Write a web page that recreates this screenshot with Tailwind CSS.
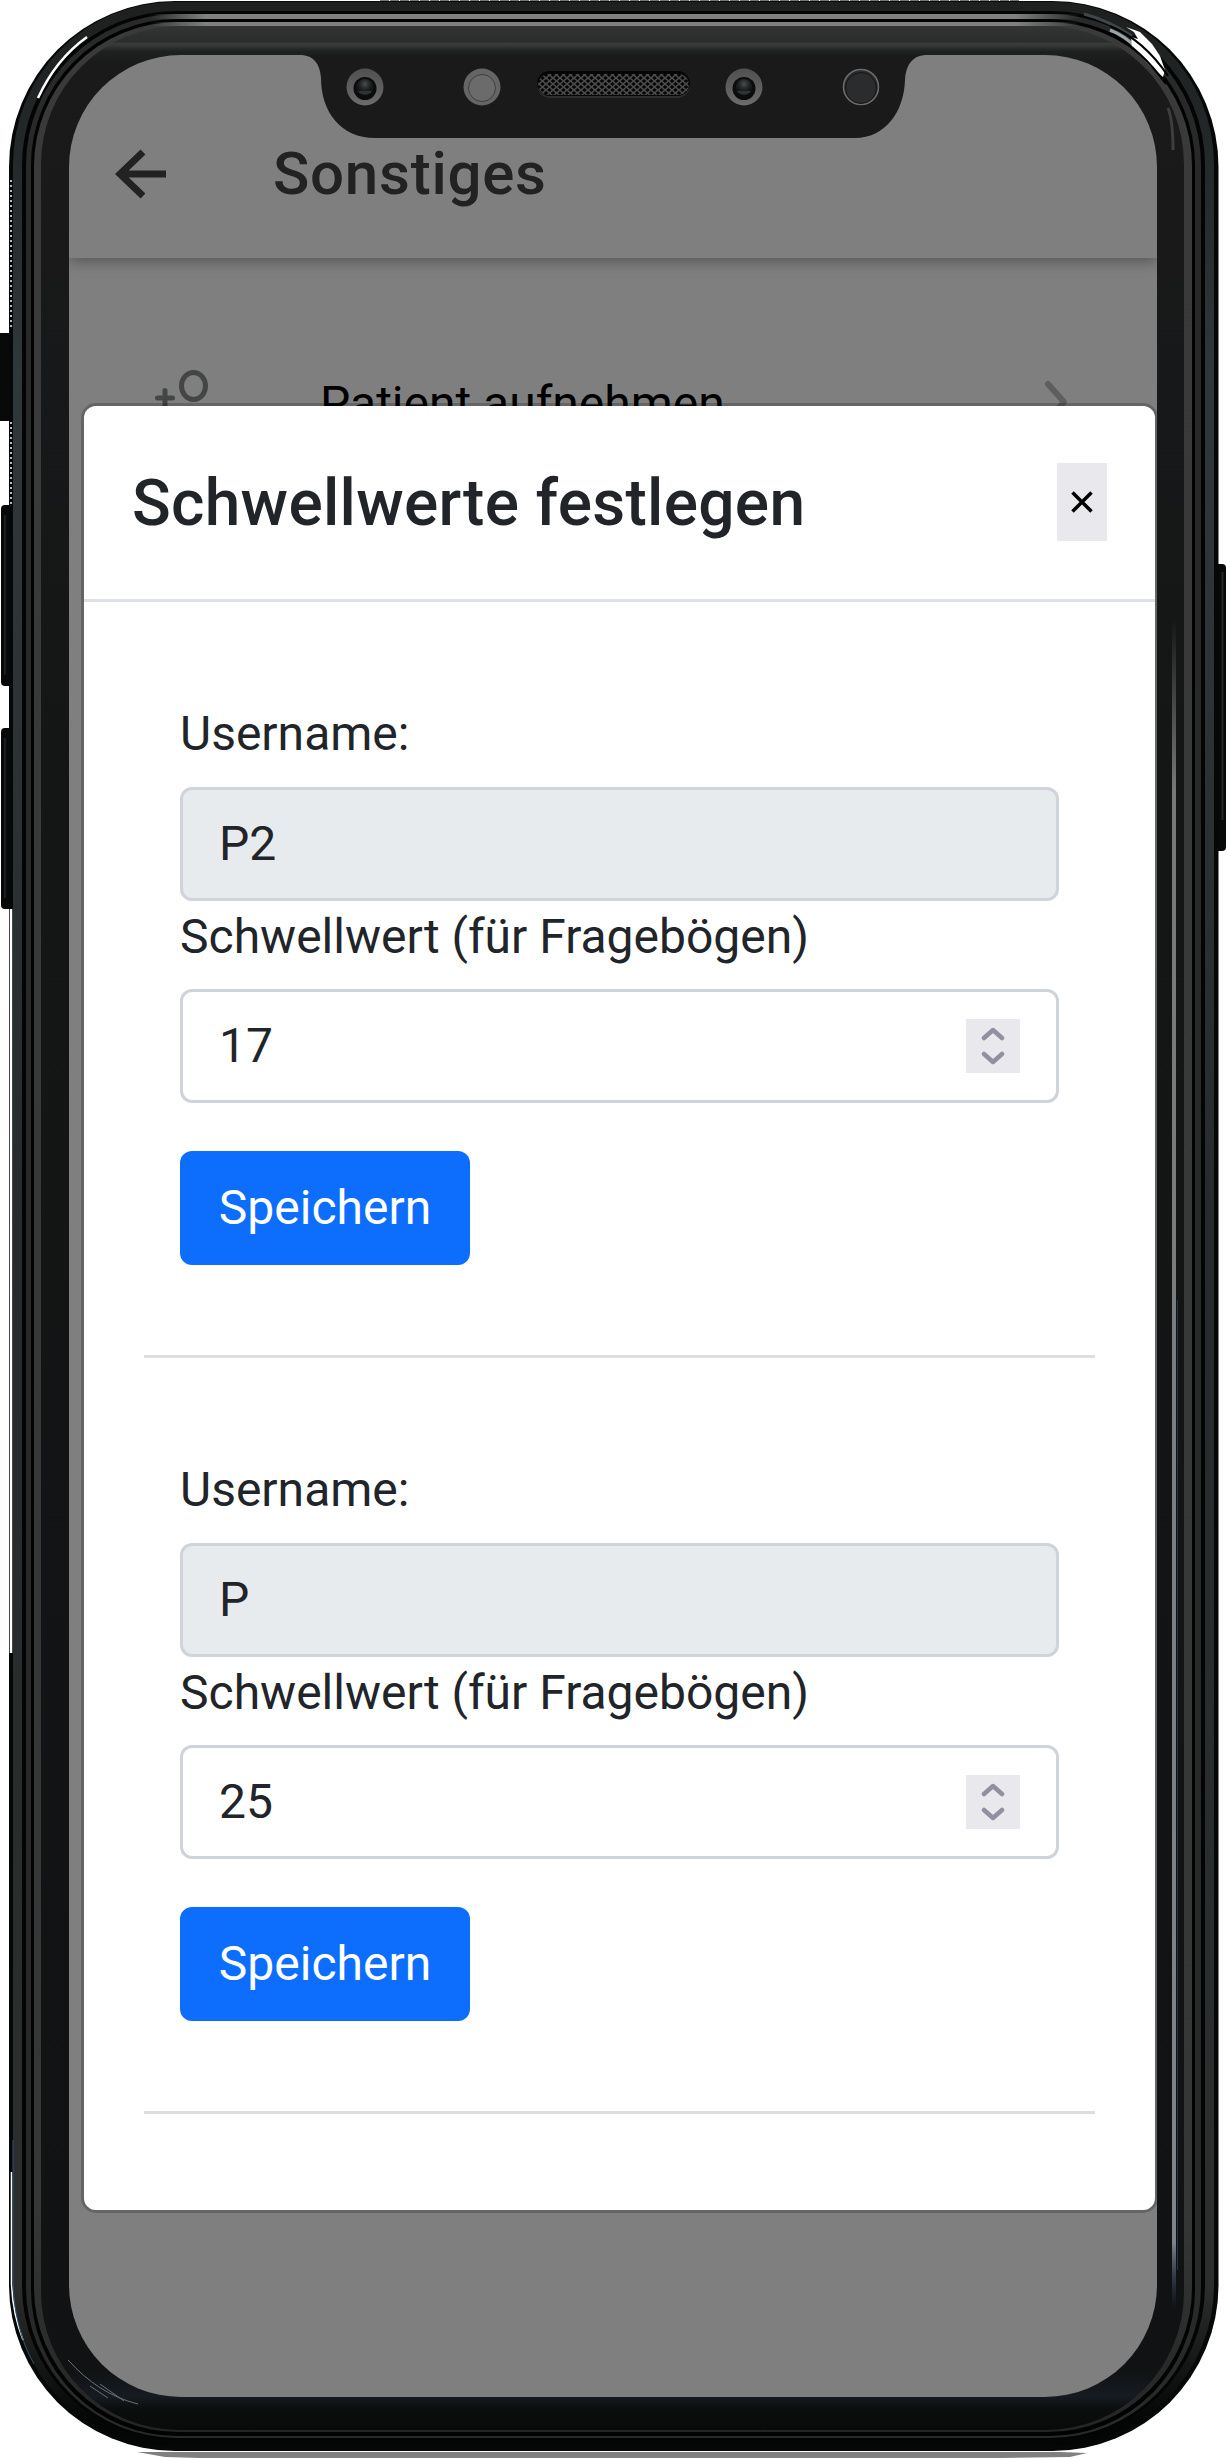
<!DOCTYPE html>
<html lang="de">
<head>
<meta charset="utf-8">
<title>Schwellwerte festlegen</title>
<script src="https://cdn.jsdelivr.net/npm/@tailwindcss/browser@4"></script>
</head>
<body class="bg-white">
<div class="relative w-[1226px] h-[2459px] overflow-hidden bg-white font-['Roboto',sans-serif] pt-[55px] pl-[69px]">
  <!-- device body -->
  <svg class="absolute inset-0" width="1226" height="2459" viewBox="0 0 1226 2459" fill="none">
    <defs>
      <linearGradient id="edge" x1="0" y1="0" x2="0" y2="2459" gradientUnits="userSpaceOnUse">
        <stop offset="0" stop-color="#1e1f1f"/><stop offset=".06" stop-color="#232829"/><stop offset=".15" stop-color="#30373a"/><stop offset=".5" stop-color="#272b2d"/><stop offset=".93" stop-color="#2c2e2e"/><stop offset=".985" stop-color="#040505"/>
      </linearGradient>
      <linearGradient id="lip" x1="0" y1="0" x2="0" y2="2459" gradientUnits="userSpaceOnUse">
        <stop offset="0" stop-color="#3a3a3a"/><stop offset=".9" stop-color="#353737"/><stop offset="1" stop-color="#222"/>
      </linearGradient>
      <linearGradient id="bezel" x1="0" y1="25" x2="0" y2="2430" gradientUnits="userSpaceOnUse">
        <stop offset="0" stop-color="#333434"/><stop offset=".007" stop-color="#2b2c2c"/><stop offset=".0078" stop-color="#3b3d3d"/><stop offset=".011" stop-color="#1f2121"/><stop offset=".016" stop-color="#1a1a1b"/><stop offset=".3" stop-color="#141616"/><stop offset=".975" stop-color="#101213"/><stop offset=".986" stop-color="#161b22"/><stop offset=".991" stop-color="#0b0e0e"/><stop offset="1" stop-color="#090909"/>
      </linearGradient>
      <linearGradient id="shine" x1="150" y1="0" x2="1080" y2="0" gradientUnits="userSpaceOnUse">
        <stop offset="0" stop-color="#808080" stop-opacity="0"/><stop offset=".06" stop-color="#808080"/><stop offset=".93" stop-color="#808080"/><stop offset="1" stop-color="#808080" stop-opacity="0"/>
      </linearGradient>
      <linearGradient id="side" x1="0" y1="620" x2="0" y2="2310" gradientUnits="userSpaceOnUse">
        <stop offset="0" stop-color="#7c7c7c" stop-opacity="0"/><stop offset=".1" stop-color="#777"/><stop offset=".96" stop-color="#808488"/><stop offset="1" stop-color="#2b4666" stop-opacity="0"/>
      </linearGradient>
    </defs>
    <path d="M137 2452H1060L1087 2453L1070 2457L1000 2458H200L165 2457Z" fill="#808080"/>
    <path d="M380 0.5H1020" stroke="#777" stroke-dasharray="9 1"/>
    <g fill="#080a0a">
      <rect x="-4" y="333" width="16" height="88" rx="4"/><rect x="1" y="505" width="16" height="181" rx="4"/><rect x="1" y="728" width="16" height="181" rx="4"/><rect x="1212" y="564" width="14" height="287" rx="4"/>
    </g>
    <path d="M5 515V675M5 738V898" stroke="#1c1e1f" stroke-width="2"/>
    <path d="M1222.500 572V820" stroke="#252727" stroke-width="2"/>
    <rect x="9" y="1" width="1209.500" height="2450" rx="166" fill="#060808"/>
    <rect x="13" y="2" width="1201" height="2445" rx="162" fill="url(#edge)"/>
    <rect x="22" y="11" width="1183" height="2429" rx="154" fill="#040404"/>
    <rect x="26" y="14" width="1175" height="2424" rx="151" fill="#282a2a"/>
    <rect x="31" y="19" width="1164" height="2417" rx="146" fill="#020202"/>
    <rect x="34" y="22" width="1158" height="2410" rx="144" fill="url(#lip)"/>
    <rect x="41" y="26" width="1143" height="2404" rx="138" fill="url(#bezel)"/>
    <rect x="150" y="14" width="930" height="5" fill="url(#shine)"/>
    <rect x="150" y="22" width="930" height="4" fill="url(#shine)"/>
    <rect x="1172" y="620" width="4" height="1690" fill="url(#side)"/>
    <path d="M1177.500 1300V2270" stroke="#1f3247"/>
    <!-- reflections on the metal edge -->
    <path d="M11 180V330M11 422V504" stroke="#b4bcc0" stroke-width="2" stroke-dasharray="2 3"/>
    <path d="M11 909V1653" stroke="#fff" stroke-width="2.500"/>
    <path d="M11.500 2172V2283C12 2300 16 2322 23 2340" stroke="#fff" stroke-width="1.500"/>
    <path d="M13 2140V2283C14 2310 20 2340 34 2364" stroke="#32506e"/>
    <path d="M38 98C50 72 66 52 87 37" stroke="#fff" stroke-width="2.500"/>
    <path d="M1084 14C1104 19 1118 27 1132 36" stroke="#3e474c" stroke-width="3"/>
    <path d="M1110 30C1122 35 1128 39 1134 46" stroke="#9aa3a8" stroke-width="3"/>
    <path d="M1126 27L1140 32L1152 44L1160 56L1165 70L1163 77L1150 66L1132 47L1131 37L1138 39L1134 32Z" fill="#fff"/>
    <path d="M1110 26C1134 36 1152 52 1168 76" stroke="#000" stroke-width="2"/>
    <path d="M1112 34C1134 46 1150 62 1166 84" stroke="#000" stroke-width="2"/>
    <path d="M68 2360C88 2382 110 2397 138 2404M90 2386L108 2398M100 2384L124 2401" stroke="#6b7075" stroke-width="1"/>
    <path d="M1168 108C1172 118 1173 132 1173 150" stroke="#3c3e3f" stroke-width="3"/>
  </svg>

  <!-- screen -->
  <div class="relative w-[1088px] h-[2342px] overflow-hidden rounded-[112px] bg-[#7f7f7f]">
    <header class="flex h-[203px] items-center gap-[107px] pl-[46px] pt-[34px] shadow-[0_3px_14px_rgba(0,0,0,0.35)]">
      <svg width="51" height="50" viewBox="0 0 51 50" fill="none" stroke="#222" stroke-width="7"><path d="M51 25H6M28 3L5 25L28 47"/></svg>
      <h1 class="text-[60px] leading-[70px] font-medium tracking-[0.75px] text-[#222]">Sonstiges</h1>
    </header>
    <div class="flex items-start pl-[86px] pt-[111px]">
      <svg width="60" height="50" viewBox="0 0 60 50" fill="none" stroke="#444646" stroke-width="5"><ellipse cx="38.500" cy="17" rx="12" ry="13.500"/><path d="M2.500 29H17.500M10 21.500V40" stroke-width="5" stroke-linecap="round"/></svg>
      <span class="ml-[105px] mt-[7px] text-[48px] leading-[56px] text-black whitespace-nowrap">Patient aufnehmen</span>
      <svg class="ml-auto mr-[84px] mt-[9px]" width="34" height="50" viewBox="0 0 34 50" fill="none" stroke="#5d5f5e" stroke-width="6" stroke-linecap="round" stroke-linejoin="round"><path d="M9 6L25 24L9 42"/></svg>
    </div>

    <!-- dialog -->
    <div class="absolute left-[12px] top-[348px] w-[1077px] h-[1810px] rounded-[15px] border-3 border-black/20">
    <section class="h-full rounded-[12px] bg-white text-[#212529]">
      <div class="flex h-[196px] items-center justify-between border-b-3 border-[#dee2e6] pl-[48px] pr-[48px]">
        <h2 class="pt-[2px] text-[64px] leading-[90px] font-medium tracking-[0.3px]">Schwellwerte festlegen</h2>
        <button class="mb-[2px] flex h-[78px] w-[50px] items-center justify-center bg-[#e9e9ed]"><svg width="22" height="22" viewBox="0 0 22 22" stroke="#000" stroke-width="3.500"><path d="M1.500 1.500L20.500 20.500M20.500 1.500L1.500 20.500"/></svg></button>
      </div>
      <form class="mx-[60px] flex h-[756px] flex-col border-b-3 border-[#dedede] px-[36px] pt-[96px] text-[48px] leading-[72px]">
        <label>Username:</label>
        <div class="mt-[17px] flex h-[114px] shrink-0 items-center rounded-[12px] border-3 border-[#ced4da] bg-[#e8ebee] px-[36px]">P2</div>
        <label>Schwellwert (für Fragebögen)</label>
        <div class="mt-[16px] flex h-[114px] shrink-0 items-center justify-between rounded-[12px] border-3 border-[#ced4da] px-[36px]">17
          <span class="flex size-[54px] items-center justify-center bg-[#e9e9ed]"><svg width="24" height="40" viewBox="0 0 24 40" fill="none" stroke="#9190a0" stroke-width="4.500" stroke-linecap="round" stroke-linejoin="round"><path d="M3 12L12 4L21 12M3 28L12 36L21 28"/></svg></span></div>
        <button class="mt-[48px] flex h-[114px] w-[290px] shrink-0 items-center justify-center rounded-[12px] bg-[#0d6efd] text-white">Speichern</button>
      </form>
      <form class="mx-[60px] flex h-[756px] flex-col border-b-3 border-[#dedede] px-[36px] pt-[96px] text-[48px] leading-[72px]">
        <label>Username:</label>
        <div class="mt-[17px] flex h-[114px] shrink-0 items-center rounded-[12px] border-3 border-[#ced4da] bg-[#e8ebee] px-[36px]">P</div>
        <label>Schwellwert (für Fragebögen)</label>
        <div class="mt-[16px] flex h-[114px] shrink-0 items-center justify-between rounded-[12px] border-3 border-[#ced4da] px-[36px]">25
          <span class="flex size-[54px] items-center justify-center bg-[#e9e9ed]"><svg width="24" height="40" viewBox="0 0 24 40" fill="none" stroke="#9190a0" stroke-width="4.500" stroke-linecap="round" stroke-linejoin="round"><path d="M3 12L12 4L21 12M3 28L12 36L21 28"/></svg></span></div>
        <button class="mt-[48px] flex h-[114px] w-[290px] shrink-0 items-center justify-center rounded-[12px] bg-[#0d6efd] text-white">Speichern</button>
      </form>
    </section>
    </div>
  </div>

  <!-- notch with cameras and speaker -->
  <svg class="absolute left-[300px] top-[50px]" width="630" height="90" viewBox="300 50 630 90" fill="none">
    <defs>
      <pattern id="mesh" width="7" height="6" patternUnits="userSpaceOnUse"><path d="M0 0L7 6M7 0L0 6" stroke="#4c4c4c" stroke-width="1.500"/></pattern>
      <linearGradient id="gl" x1="0" y1="0" x2="0" y2="1"><stop offset="0" stop-color="#505050"/><stop offset="1" stop-color="#6c6c6c"/></linearGradient>
      <radialGradient id="lens" cx=".5" cy=".3" r=".6"><stop offset="0" stop-color="#4a4d4d"/><stop offset=".5" stop-color="#222525"/><stop offset="1" stop-color="#0d0e0e"/></radialGradient>
    </defs>
    <path d="M302 55C314 56 320 64 321 78C321 112 341 138 375 138H855C885 138 904 112 905 80C906 63 914 55 927 55Z" fill="#1a1a1b"/>
    <g id="camera">
      <circle cx="365" cy="87" r="18.500" fill="url(#gl)"/><circle cx="365" cy="88.500" r="11.500" fill="#0b0c0c"/><circle cx="365" cy="87.500" r="8.500" fill="url(#lens)"/><path d="M358 91C360 96 370 96 372 91Z" fill="#303333"/>
    </g>
    <circle cx="482" cy="87" r="18.500" fill="#656565"/><circle cx="482" cy="88" r="13.500" fill="#6b6b6c" stroke="#3f3f3f"/>
    <rect x="537" y="72" width="153" height="26" rx="13" fill="#2d2e2e"/>
    <rect x="537" y="71" width="153" height="25" rx="12.500" fill="#060606"/>
    <rect x="538" y="74" width="151" height="21" rx="10.500" fill="url(#mesh)"/>
    <use href="#camera" x="379"/>
    <circle cx="861" cy="87" r="17.500" fill="#2a2c2d" stroke="#6c6c6c" stroke-width="1.500"/><circle cx="861" cy="88" r="15.500" stroke="#151515"/>
  </svg>
</div>
</body>
</html>
